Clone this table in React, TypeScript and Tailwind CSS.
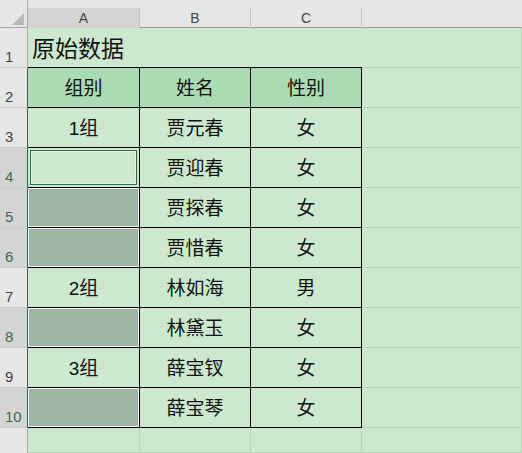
import React from "react";

type Row = { group: string; name: string; sex: string; sel?: "active" | "gray" };

const ROWS: Row[] = [
  { group: "1组", name: "贾元春", sex: "女" },
  { group: "", name: "贾迎春", sex: "女", sel: "active" },
  { group: "", name: "贾探春", sex: "女", sel: "gray" },
  { group: "", name: "贾惜春", sex: "女", sel: "gray" },
  { group: "2组", name: "林如海", sex: "男" },
  { group: "", name: "林黛玉", sex: "女", sel: "gray" },
  { group: "3组", name: "薛宝钗", sex: "女" },
  { group: "", name: "薛宝琴", sex: "女", sel: "gray" },
];

function RowHead({ n, selected, table }: { n: number; selected?: boolean; table?: boolean }) {
  return (
    <div
      className={
        "flex items-end pl-[5px] pb-0 text-[15px] leading-[20px] border-b border-b-[#c9c9c9] border-r " +
        (selected
          ? "bg-[#d4d4d4] text-[#3f6a4d] border-r-[#217346]"
          : "bg-[#e6e6e6] text-[#444] " + (table ? "border-r-[#555]" : "border-r-[#a8a8a8]"))
      }
    >
      {n}
    </div>
  );
}

function ColHead({ label, selected, last }: { label: string; selected?: boolean; last?: boolean }) {
  return (
    <div
      className={
        "flex flex-col bg-[#e6e6e6] " +
        (selected ? "border-b-2 border-[#217346]" : "border-b border-[#9e9e9e]")
      }
    >
      <div
        className={
          "mt-2 flex-1 flex items-center justify-center text-[14px] text-[#444] " +
          (last ? "" : "border-r border-[#c4c4c4] ") +
          (selected ? "bg-[#d4d4d4]" : "")
        }
      >
        {label}
      </div>
    </div>
  );
}

const cell = "flex items-center justify-center pt-[3px] text-[19px] text-[#111] bg-[#cce8cf] border-r border-b";
const grid = "bg-[#cce8cf] border-r border-b border-[#b6d4ba]";

export default function App() {
  return (
    <div className="w-[522px] h-[453px] overflow-hidden bg-[#cce8cf] font-['Liberation_Sans','Noto_Sans_CJK_SC',sans-serif]">
      <div className="grid h-full grid-cols-[28px_112px_111px_111px_1fr] grid-rows-[28px_repeat(10,40px)_1fr]">
        {/* header row */}
        <div className="bg-[#e6e6e6] border-r border-b border-[#a8a8a8] flex items-end justify-end pr-[3px] pb-[2px]">
          <svg width="12" height="12" viewBox="0 0 12 12">
            <polygon points="12,0 12,12 0,12" fill="#b9b9b9" />
          </svg>
        </div>
        <ColHead label="A" selected />
        <ColHead label="B" />
        <ColHead label="C" />
        <ColHead label="" last />

        {/* row 1 */}
        <RowHead n={1} />
        <div className="col-span-3 flex items-center pl-1 pt-[4px] text-[23px] text-[#111] bg-[#cce8cf] border-b border-black">
          原始数据
        </div>
        <div className={grid} />

        {/* row 2 */}
        <RowHead n={2} table />
        {["组别", "姓名", "性别"].map((t) => (
          <div key={t} className="flex items-center justify-center pt-[3px] text-[19px] text-[#111] bg-[#abdbb3] border-r border-b border-black">
            {t}
          </div>
        ))}
        <div className={grid} />

        {ROWS.map((r, i) => (
          <React.Fragment key={r.name}>
            <RowHead n={i + 3} table selected={!!r.sel} />
            {r.sel === "gray" ? (
              <div className="bg-[#9db5a1] border-r border-b border-black shadow-[inset_1px_1px_0_#f4f4f4,inset_-1px_-1px_0_#f4f4f4]" />
            ) : r.sel === "active" ? (
              <div className="bg-[#cce8cf] border-r border-b border-black p-[2px]">
                <div className="h-full border border-[#2e6b45] shadow-[inset_0_0_0_1px_#e2f2e4]" />
              </div>
            ) : (
              <div className={cell + " border-black"}>{r.group}</div>
            )}
            <div className={cell + " border-black"}>{r.name}</div>
            <div className={cell + " border-black"}>{r.sex}</div>
            <div className={grid} />
          </React.Fragment>
        ))}

        {/* row 11 (partial) */}
        <div className="bg-[#e6e6e6] border-r border-[#a8a8a8]" />
        <div className={grid} />
        <div className={grid} />
        <div className={grid} />
        <div className={grid} />
      </div>
    </div>
  );
}
